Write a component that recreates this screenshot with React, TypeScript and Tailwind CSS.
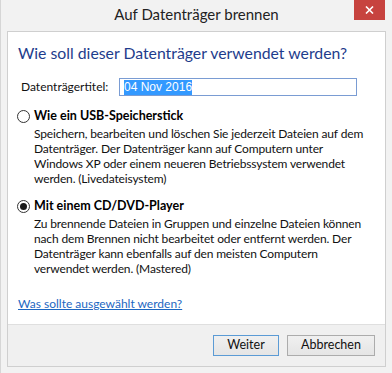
import React from 'react';

const font = { fontFamily: 'Lato, "Noto Sans", sans-serif' };

function Radio({ checked }: { checked: boolean }) {
    return (
        <span className="flex h-[13px] w-[13px] shrink-0 items-center justify-center rounded-full border border-[#333] bg-white">
            {checked && <span className="h-[7px] w-[7px] rounded-full bg-[#1a1a1a]" />}
        </span>
    );
}

function Option({ checked, title, lines }: { checked: boolean; title: string; lines: string[] }) {
    return (
        <div className="flex flex-col">
            <div className="flex h-[16px] items-center gap-[4px] pl-[9px]">
                <Radio checked={checked} />
                <span className="text-[12.5px] font-bold leading-[16px] text-black">{title}</span>
            </div>
            <div className="pl-[26px] pt-[2px] text-[12px] leading-[15px] tracking-[-0.15px] text-[#111]">
                {lines.map((l) => (
                    <div key={l} className="whitespace-nowrap">{l}</div>
                ))}
            </div>
        </div>
    );
}

export default function App() {
    return (
        <div style={font} className="flex h-[373px] w-[392px] flex-col border-l border-[#d6d6d6] bg-[#f2f2f2]">
            {/* Title bar */}
            <div className="relative flex h-[31px] shrink-0 items-center justify-center pb-[2px]">
                <span className="text-[15px] text-[#222]">Auf Datenträger brennen</span>
                <div className="absolute right-[7px] top-0 flex h-[20px] w-[31px] items-center justify-center bg-[#c7433f]">
                    <svg width="9" height="8" viewBox="0 0 9 8">
                        <path d="M1 0.5l7 7M8 0.5l-7 7" stroke="white" strokeWidth="1.6" />
                    </svg>
                </div>
            </div>

            {/* Panel */}
            <div className="mx-[6px] flex h-[336px] flex-col border border-[#cfcfcf] bg-white">
                <div className="flex flex-1 flex-col">
                    <div className="whitespace-nowrap pl-[10px] pt-[10px] text-[15.8px] leading-[22px] text-[#1e3c8c]">
                        Wie soll dieser Datenträger verwendet werden?
                    </div>

                    <div className="mt-[14px] flex h-[18px] items-center">
                        <span className="w-[111px] whitespace-nowrap pl-[13px] text-[12px] text-[#111]">Datenträgertitel:</span>
                        <div className="flex h-[18px] w-[238px] items-center border border-[#7a9cd3] px-[4px]">
                            <span className="bg-[#3399ff] text-[12px] leading-[15px] text-white" style={{ fontFamily: '"Liberation Sans", sans-serif' }}>
                                04 Nov 2016
                            </span>
                        </div>
                    </div>

                    <div className="mt-[12px]">
                        <Option
                            checked={false}
                            title="Wie ein USB-Speicherstick"
                            lines={[
                                'Speichern, bearbeiten und löschen Sie jederzeit Dateien auf dem',
                                'Datenträger. Der Datenträger kann auf Computern unter',
                                'Windows XP oder einem neueren Betriebssystem verwendet',
                                'werden. (Livedateisystem)',
                            ]}
                        />
                    </div>

                    <div className="mt-[12px]">
                        <Option
                            checked={true}
                            title="Mit einem CD/DVD-Player"
                            lines={[
                                'Zu brennende Dateien in Gruppen und einzelne Dateien können',
                                'nach dem Brennen nicht bearbeitet oder entfernt werden. Der',
                                'Datenträger kann ebenfalls auf den meisten Computern',
                                'verwendet werden. (Mastered)',
                            ]}
                        />
                    </div>

                    <div className="mt-[18px] pl-[10px] leading-[16px]">
                        <span className="text-[12px] text-[#1d67c2] underline">Was sollte ausgewählt werden?</span>
                    </div>
                </div>

                {/* Footer */}
                <div className="flex h-[42px] shrink-0 items-center justify-end gap-[8px] border-t border-[#dfdfdf] bg-[#f0f0f0] pb-[1px] pr-[10px]">
                    <button className="h-[21px] w-[66px] border border-[#5b9bd5] bg-gradient-to-b from-[#f0f0f0] to-[#e5e5e5] text-[12.5px] text-[#111]">
                        Weiter
                    </button>
                    <button className="h-[21px] w-[88px] border border-[#acacac] bg-gradient-to-b from-[#f0f0f0] to-[#e5e5e5] text-[12.5px] text-[#111]">
                        Abbrechen
                    </button>
                </div>
            </div>
        </div>
    );
}
